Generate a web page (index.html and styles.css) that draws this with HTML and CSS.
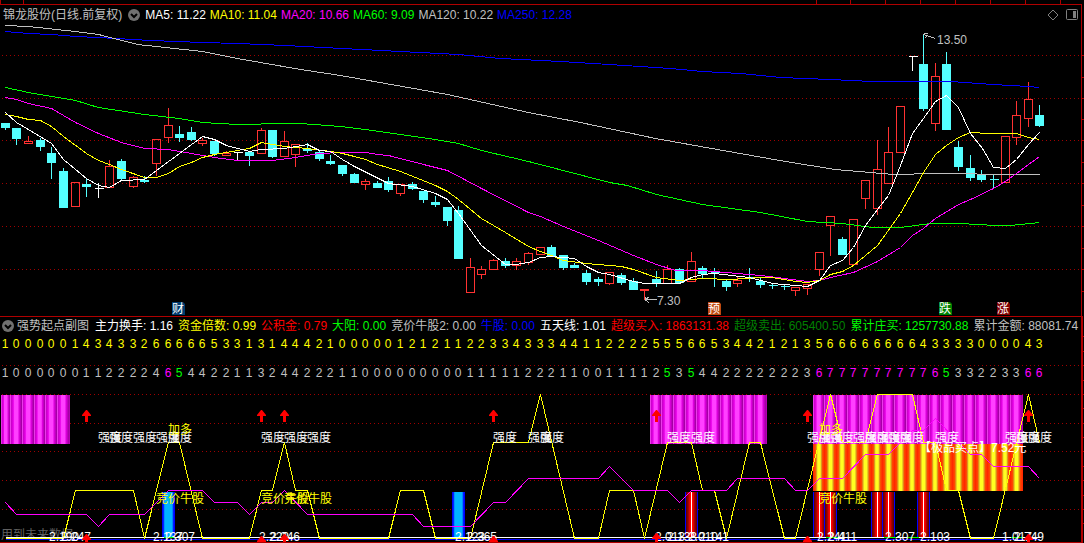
FILE: index.html
```html
<!DOCTYPE html>
<html lang="zh-CN">
<head>
	<meta charset="utf-8">
	<title>锦龙股份 日线</title>
	<link rel="stylesheet" href="styles.css">
</head>
<body>
	<svg class="ruler" viewBox="0 0 1084 4" aria-hidden="true">
		<path d="M0 0h1v4h-1zM23 0h1v4h-1zM816 0h1v4h-1zM850 0h1v4h-1zM885 0h1v4h-1zM920 0h1v4h-1zM955 0h1v4h-1zM990 0h1v4h-1zM1025 0h1v4h-1zM1060 0h1v4h-1z"/>
	</svg>
	<section class="panel price">
		<header class="legend">
			<h1 class="title">锦龙股份(日线.前复权)</h1>
			<button type="button" class="toggle" aria-label="指标菜单">
				<svg viewBox="0 0 12 12"><circle cx="6" cy="6" r="6"/><path d="M3 5l3 3 3-3"/></svg>
			</button>
			<span class="white">MA5: 11.22</span>
			<span class="yellow">MA10: 11.04</span>
			<span class="magenta">MA20: 10.66</span>
			<span class="green">MA60: 9.09</span>
			<span class="silver">MA120: 10.22</span>
			<span class="blue">MA250: 12.28</span>
			<span class="tools">
				<button type="button" class="tool" aria-label="标记">
					<svg viewBox="0 0 12 12"><path d="M6 1l5 5-5 5-5-5z"/></svg>
				</button>
				<button type="button" class="tool" aria-label="侧栏">
					<svg viewBox="0 0 12 12"><rect x="0.5" y="0.5" width="11" height="10" rx="1"/><rect class="fill" x="7" y="2" width="3" height="7"/></svg>
				</button>
			</span>
		</header>
		<svg class="chart" id="price" viewBox="0 24 1081 292"></svg>
	</section>
	<section class="panel strength">
		<header class="legend">
			<button type="button" class="toggle" aria-label="副图菜单">
				<svg viewBox="0 0 12 12"><circle cx="6" cy="6" r="6"/><path d="M3 5l3 3 3-3"/></svg>
			</button>
			<h2 class="title">强势起点副图</h2>
			<span class="white">主力换手: 1.16</span>
			<span class="yellow">资金倍数: 0.99</span>
			<span class="red">公积金: 0.79</span>
			<span class="green">大阳: 0.00</span>
			<span class="silver">竞价牛股2: 0.00</span>
			<span class="blue">牛股: 0.00</span>
			<span class="white">五天线: 1.01</span>
			<span class="red">超级买入: 1863131.38</span>
			<span class="dark-green">超级卖出: 605400.50</span>
			<span class="green">累计庄买: 1257730.88</span>
			<span class="silver">累计金额: 88081.74</span>
		</header>
		<svg class="chart" id="strength" viewBox="0 334 1081 208">
			<defs>
				<linearGradient id="g-pink">
					<stop offset="0" stop-color="#ff60ff"/>
					<stop offset="0.1" stop-color="#c800c8"/>
					<stop offset="0.25" stop-color="#e800e8"/>
					<stop offset="0.35" stop-color="#ff40ff"/>
					<stop offset="0.6" stop-color="#ff40ff"/>
					<stop offset="0.7" stop-color="#e000e0"/>
					<stop offset="0.9" stop-color="#a000a0"/>
					<stop offset="1" stop-color="#c000c0"/>
				</linearGradient>
				<linearGradient id="g-fire">
					<stop offset="0" stop-color="#ff2000"/>
					<stop offset="0.2" stop-color="#ff4800"/>
					<stop offset="0.3" stop-color="#d8a020"/>
					<stop offset="0.4" stop-color="#ffff20"/>
					<stop offset="0.6" stop-color="#ffff20"/>
					<stop offset="0.7" stop-color="#d8a020"/>
					<stop offset="0.8" stop-color="#ff4800"/>
					<stop offset="1" stop-color="#ff2000"/>
				</linearGradient>
				<linearGradient id="g-blue">
					<stop offset="0" stop-color="#0000ff"/>
					<stop offset="0.1" stop-color="#0000ff"/>
					<stop offset="0.15" stop-color="#0078ff"/>
					<stop offset="0.25" stop-color="#00b4ff"/>
					<stop offset="0.75" stop-color="#00b4ff"/>
					<stop offset="0.85" stop-color="#0060ff"/>
					<stop offset="0.9" stop-color="#0000ff"/>
				</linearGradient>
				<linearGradient id="g-red">
					<stop offset="0" stop-color="#0000ff"/>
					<stop offset="0.08" stop-color="#0000ff"/>
					<stop offset="0.09" stop-color="#600000"/>
					<stop offset="0.25" stop-color="#a00000"/>
					<stop offset="0.4" stop-color="#ff0000"/>
					<stop offset="0.6" stop-color="#ff0000"/>
					<stop offset="0.75" stop-color="#a00000"/>
					<stop offset="0.91" stop-color="#600000"/>
					<stop offset="0.92" stop-color="#0000ff"/>
				</linearGradient>
			</defs>
		</svg>
	</section>
	<script src="chart.js"></script>
</body>
</html>
```

FILE: styles.css
```css
*, *:before, *:after {
	box-sizing: border-box;
}
body {
	margin: 0;
	background: #000;
	color: #c0c0c0;
	font-family: "Liberation Sans", Arial, "Noto Sans CJK SC", sans-serif;
	font-size: 12px;
	line-height: 18px;
	overflow: hidden;
}
svg {
	display: block;
}
.ruler {
	width: 100%;
	fill: #b00000;
	shape-rendering: crispEdges;
}
.panel {
	border: 0 solid #b00000;
	border-top-width: 1px;
}
.price {
	margin-right: 2px;
	border-right-width: 1px;
}
.strength {
	margin-right: 1px;
	border-right-width: 2px;
	border-bottom-width: 1px;
}
.legend {
	display: flex;
	align-items: center;
	gap: 4px;
	height: 19px;
	padding-left: 3px;
	overflow: hidden;
	white-space: nowrap;
}
.strength .legend {
	height: 17px;
	padding-left: 2px;
	gap: 5px;
}
.title {
	margin: 0;
	font-size: 12px;
	font-weight: normal;
}
.strength .title {
	margin: 0 1px 0 -2px;
}
button {
	flex: none;
	width: 12px;
	height: 12px;
	padding: 0;
	border: 0;
	background: none;
}
.price .toggle {
	margin: 0 1px 0 2px;
}
.toggle circle {
	fill: #707070;
}
.toggle path {
	fill: none;
	stroke: #000;
	stroke-width: 2;
}
.tools {
	display: flex;
	gap: 7px;
	margin-left: auto;
	padding-right: 3px;
}
.tool svg {
	fill: none;
	stroke: #808080;
}
.tool .fill {
	fill: #808080;
	stroke: none;
}
.white { color: #fff; }
.yellow { color: #ff0; }
.magenta { color: #f0f; }
.green { color: #0f0; }
.silver { color: #c0c0c0; }
.blue { color: #00f; }
.red { color: #f00; }
.dark-green { color: #008000; }

.chart {
	width: 100%;
	overflow: visible;
}
.chart text {
	fill: currentColor;
}
.chart .shape {
	shape-rendering: crispEdges;
}
.chart .mid {
	text-anchor: middle;
}
.grid {
	fill: none;
	stroke: #a00000;
	stroke-dasharray: 1 3;
}
.axis {
	stroke: #b00000;
}
.line {
	fill: none;
	stroke: currentColor;
}
.up {
	fill: none;
	stroke: #ff3232;
}
.down {
	fill: #54ffff;
	stroke: #54ffff;
}
.flat {
	fill: #fff;
	stroke: #fff;
}
.arrow {
	fill: #f00;
}
.note {
	color: #606060;
}
```

FILE: chart.js
```js
var NS = 'http://www.w3.org/2000/svg';
var price = document.getElementById('price');
var strength = document.getElementById('strength');

function add(parent, tag, cls, attrs, text) {
	var el = document.createElementNS(NS, tag);
	if (cls) el.setAttribute('class', cls);
	for (var k in attrs) el.setAttribute(k, attrs[k]);
	if (text !== undefined) el.textContent = text;
	parent.appendChild(el);
	return el;
}

// centre of day i
function cx(i) {
	return Math.floor(5.25 + i * 11.626);
}

// group shifted to pixel centres so 1px strokes stay sharp
function sharp(parent) {
	return add(parent, 'g', 'shape', { transform: 'translate(0.5 0.5)' });
}

function label(parent, cls, x, y, text) {
	add(parent, 'text', cls, { x: x, y: y }, text);
}

function gridLines(g, rows, ticks) {
	rows.forEach(function (y) {
		add(g, 'line', 'grid', { x1: 1, x2: 1079, y1: y, y2: y });
	});
	ticks.forEach(function (y) {
		add(g, 'line', 'axis', { x1: 1081, x2: 1083, y1: y, y2: y });
	});
}

// type, high, body top, body bottom, low
var candles = [
	['d',122,123,127,129],['d',128,128,138,144],['u',135,141,143,143],['d',137,140,146,150],['d',146,153,162,178],
	['d',167,171,207,207],['u',181,182,206,206],['d',177,184,186,196],['w',182,188,188,197],['u',159,166,187,187],
	['d',158,161,178,179],['u',175,177,186,187],['d',175,180,181,182],['u',139,139,163,175],['u',107,125,137,142],
	['d',125,134,137,141],['d',126,132,139,140],['u',137,140,143,145],['d',140,141,153,155],['u',150,153,155,155],
	['w',151,152,152,160],['d',150,152,155,165],['u',127,130,153,153],['d',129,130,156,157],['u',130,141,156,156],
	['u',144,144,154,166],['d',142,149,150,152],['d',149,152,158,160],['d',154,161,163,164],['d',164,165,173,175],
	['d',172,174,182,182],['u',178,181,184,189],['d',180,183,187,187],['d',176,181,189,191],['u',184,184,193,195],
	['d',181,184,188,189],['d',191,191,199,202],['d',195,202,204,206],['d',206,207,220,225],['d',205,210,258,258],
	['u',257,267,292,292],['u',265,269,274,278],['u',258,260,269,269],['d',257,261,265,267],['u',257,261,265,269],
	['u',251,253,262,264],['u',247,247,254,254],['d',244,247,255,255],['d',254,255,267,269],['d',262,265,267,267],
	['d',269,273,281,284],['d',276,279,281,285],['u',272,272,283,284],['d',272,275,282,284],['d',277,281,289,289],
	['u',288,289,290,299],['d',270,279,283,286],['u',264,269,283,283],['d',267,269,282,282],['u',251,261,281,281],
	['d',265,268,273,277],['d',267,272,272,286],['d',278,281,286,290],['u',275,280,283,286],['d',267,277,278,281],
	['d',276,281,284,287],['d',282,285,285,288],['d',284,286,286,289],['u',286,287,290,295],['u',283,284,288,294],
	['u',252,252,269,275],['u',216,216,225,255],['d',236,239,254,254],['u',219,219,264,264],['u',180,180,198,208],
	['u',139,169,208,214],['u',126,152,183,183],['u',106,106,152,152],['w',56,56,56,70],['d',34,64,108,110],
	['u',62,76,123,130],['d',51,64,129,129],['d',140,147,166,170],['d',154,168,177,180],['d',169,174,179,181],
	['d',173,179,179,188],['u',136,136,182,182],['u',100,115,137,144],['u',81,99,118,126],['d',104,115,125,126]
];

var averages = {
	blue: '5,31 28,33 51,34 75,36 98,37 150,40 202,42 237,43 285,45 342,48 400,51 458,54 500,58 560,61 609,64 670,68 702,71 740,73 780,77 830,79 872,81 950,81 993,84 1028,86 1039,87',
	silver: '5,25 28,26 75,31 98,34 137,44 165,47 202,51 237,58 300,69 340,75 447,94 528,112 580,122 655,138 700,146 785,161 835,169 893,174 935,173 970,173 982,174 1039,174',
	green: '5,87 28,92 51,96 75,100 98,107 144,114 179,118 202,122 237,124 284,123 300,123 340,126 365,129 400,134 435,139 458,143 481,150 528,161 609,182 627,185 656,194 702,204 760,212 807,221 842,223 872,227 900,227 930,223 960,223 995,225 1010,225 1039,222',
	magenta: '5,97 16,99 28,103 51,108 63,115 75,122 98,133 121,142 144,148 168,149 191,153 214,157 237,160 272,160 295,157 319,153 340,152 365,152 377,154 388,155 423,164 447,170 481,188 528,212 540,216 563,226 598,240 633,255 656,264 675,270 702,270 737,273 760,275 784,278 807,281 819,280 830,277 853,272 877,261 900,247 912,235 923,228 935,218 958,204 970,199 993,188 1005,181 1039,156',
	yellow: '5,114 16,116 28,119 40,120 51,126 63,136 86,153 98,160 109,164 121,169 144,177 156,177 168,173 179,166 191,162 202,157 214,154 237,150 249,148 261,142 284,146 307,148 330,151 342,153 354,156 365,159 377,164 400,171 435,185 447,191 458,199 481,218 505,232 528,246 540,251 551,255 563,260 586,263 621,266 633,269 656,277 679,280 702,278 730,279 760,277 772,277 795,281 807,282 819,280 830,274 842,271 853,265 877,245 900,213 912,192 923,172 935,154 946,145 958,137 970,132 988,133 1016,133 1028,137 1039,139',
	white: '5,112 16,122 28,129 51,143 63,159 86,178 98,185 109,187 121,180 144,179 156,170 179,153 202,136 214,139 226,145 249,151 261,149 284,148 307,144 319,150 330,151 342,159 354,166 388,183 412,186 435,193 447,199 458,213 481,245 505,264 516,264 528,262 540,257 551,256 574,258 586,266 598,272 609,274 633,281 644,283 679,283 691,277 702,274 714,273 749,277 772,283 795,285 807,286 819,280 830,265 842,260 853,247 865,225 877,209 888,195 900,165 912,133 923,118 935,101 946,95 958,107 970,133 982,148 993,167 1005,168 1016,159 1028,144 1039,132'
};

var g = sharp(price);
gridLines(g, [55, 98, 140, 183, 226, 269], [55, 77, 98, 119, 140, 162, 183, 205, 226, 248, 269, 291]);

candles.forEach(function (c, i) {
	var cls = { u: 'up', d: 'down', w: 'flat' }[c[0]];
	var x = cx(i);
	add(g, 'path', cls, { d: 'M' + x + ' ' + c[1] + 'V' + c[2] + 'M' + x + ' ' + c[3] + 'V' + c[4] });
	if (c[3] - c[2] > 0) {
		add(g, 'rect', cls, { x: x - 4, y: c[2], width: 8, height: c[3] - c[2] });
	} else {
		add(g, 'path', cls, { d: 'M' + (x - 4) + ' ' + c[2] + 'h9' });
	}
});
for (var name in averages) {
	add(g, 'polyline', 'line ' + name, { points: averages[name] });
}

add(g, 'path', 'line silver', { d: 'M923 34l12 4M923 33h4M924 38l3-3' });
label(price, 'silver', 937, 44, '13.50');
add(g, 'path', 'line silver', { d: 'M645 299h11M649 296l-4 3 4 4M645 296v4' });
label(price, 'silver', 657, 305, '7.30');

[[172, '财', '#003c70'], [708, '预', '#c04a10'], [939, '跌', '#008000'], [997, '涨', '#800000']].forEach(function (b) {
	add(price, 'path', '', { d: 'M' + b[0] + ' 302h11l2 2v11h-13z', fill: b[2] });
	label(price, 'white', b[0], 313, b[1]);
});

// lower panel
var s = sharp(strength);
gridLines(s, [365, 394, 423, 451, 480, 509], [336, 351, 365, 380, 394, 408, 423, 437, 451, 466, 480, 495, 509, 523]);

var rowA = '1000001434332666665331314442100' + '0001212112233433344112222555665' + '3442121356666666643333000043';
var rowB = '1000000112222465442211324422211' + '0000000001111122211001111253544' + '2222222367777777776533223366';
rowA.split('').forEach(function (n, i) {
	label(strength, 'mid yellow', cx(i), 348, n);
});
rowB.split('').forEach(function (n, i) {
	var cls = n > 5 ? 'magenta' : n == 5 ? 'green' : 'silver';
	label(strength, 'mid ' + cls, cx(i), 377, n);
});

function bars(from, to, y, height, fill) {
	for (var i = from; i <= to; i++) {
		var x = Math.max(1, cx(i) - 6);
		add(strength, 'rect', 'shape', { x: x, y: y, width: cx(i + 1) - 5 - x, height: height, fill: 'url(#' + fill + ')' });
	}
}
bars(0, 5, 395, 49, 'g-pink');
bars(56, 65, 395, 49, 'g-pink');
bars(70, 87, 395, 49, 'g-pink');
bars(70, 87, 444, 47, 'g-fire');

[14, 39].forEach(function (i) {
	add(strength, 'rect', 'shape', { x: cx(i) - 6, y: 492, width: 13, height: 46, fill: 'url(#g-blue)' });
});
[59, 70, 71, 75, 76, 79].forEach(function (i) {
	add(strength, 'rect', 'shape', { x: cx(i) - 6, y: 492, width: 13, height: 46, fill: 'url(#g-red)' });
	add(strength, 'rect', 'shape', { x: cx(i), y: 492, width: 1, height: 46, fill: '#fff' });
});

label(strength, 'note', 1, 539, '用到未来数据');

var top2 = sharp(strength);
add(top2, 'path', 'line blue', { d: 'M5 539H1039' });
add(top2, 'path', 'line white', { d: 'M5 537H1039' });
add(top2, 'path', 'line green', { d: 'M163 537h11M825 537h12M883 537h12M906 537h12M1010 537h12' });
add(top2, 'polyline', 'line yellow', { points: '5,538 63,538 75,490 133,490 144,538 168,442 179,442 202,538 249,538 261,490 272,490 284,442 295,490 307,490 319,538 388,538 400,490 423,490 435,538 470,538 493,442 528,442 540,394 574,538 598,538 609,490 633,490 644,538 667,442 691,442 702,490 714,490 726,538 749,442 760,442 784,538 795,538 830,394 842,442 865,442 877,394 912,394 923,442 935,442 946,490 958,490 970,538 993,538 1028,394 1039,442' });
add(top2, 'polyline', 'line magenta', { points: '5,502 16,514 86,514 98,526 109,514 144,514 168,490 202,490 214,502 237,502 249,514 261,502 272,502 284,490 307,514 412,514 423,526 470,526 493,502 505,502 528,478 598,478 609,466 633,490 667,490 679,502 691,490 726,490 737,478 784,478 795,490 807,490 819,478 842,478 865,454 888,454 912,430 923,430 935,418 970,454 981,454 993,466 1028,466 1039,478' });

[8, 9, 11, 13, 14, 22, 24, 26, 42, 45, 46, 57, 59, 69, 70, 71, 73, 74, 75, 76, 77, 80, 86, 87, 88].forEach(function (i) {
	label(strength, 'white', cx(i), 442, '强度');
});
[14, 70].forEach(function (i) {
	label(strength, 'yellow', cx(i), 434, '加多');
});
[13, 22, 24, 70].forEach(function (i) {
	label(strength, 'yellow', cx(i), 503, '竞价牛股');
});
label(strength, 'white', 919, 452, '【极品买点】7.52元');

[[49, '2.190'], [61, '2.247'], [153, '2.137'], [165, '2.307'], [259, '2.222'], [270, '2.246'], [455, '2.123'], [467, '2.365'],
 [655, '2.013'], [667, '2.133'], [688, '2.010'], [699, '2.141'], [817, '2.241'], [828, '2.411'], [885, '2.307'], [920, '2.103'],
 [1002, '1.017'], [1014, '2.749']].forEach(function (v) {
	label(strength, 'white', v[0], 541, v[1]);
});

// signal arrows above, and their feet on the baseline
[[7, 534], [22, 536], [24, 534], [42, 536], [56, 533], [69, 536], [88, 534]].forEach(function (a) {
	var x = cx(a[0]);
	add(strength, 'path', 'arrow', { d: 'M' + x + ' 410h1l4 5v1h-3v6h-3v-6h-3v-1z' });
	add(strength, 'path', 'arrow', { d: 'M' + x + ' ' + a[1] + 'h1l4 5v1h-3V542h-3V' + (a[1] + 6) + 'h-3v-1z' });
});
```
